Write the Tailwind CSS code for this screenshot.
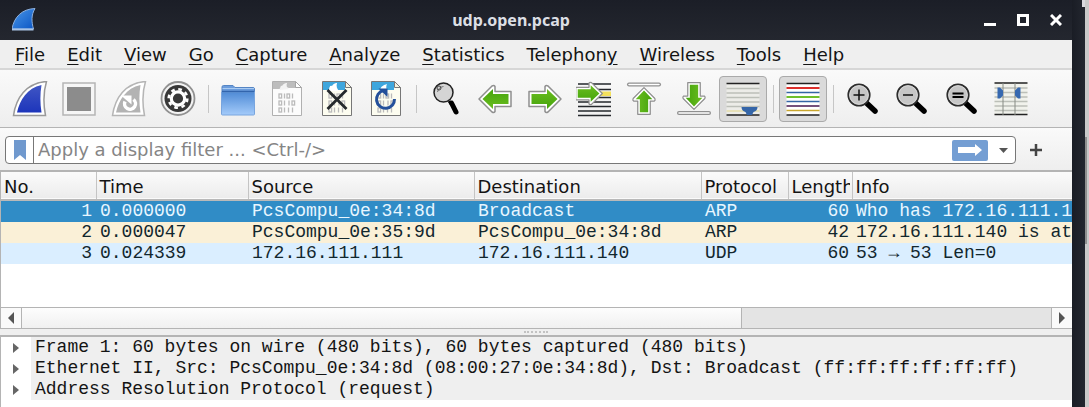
<!DOCTYPE html>
<html lang="en">
<head>
<meta charset="utf-8">
<title>udp.open.pcap</title>
<script src="https://cdn.jsdelivr.net/npm/@tailwindcss/browser@4"></script>
</head>
<body class="flex h-screen overflow-hidden bg-[#20232b] font-['DejaVu_Sans',sans-serif] text-lg text-[#141414]">

<svg class="size-0 shrink-0" aria-hidden="true">
  <defs>
    <linearGradient id="finBlue" x1="0" y1="0" x2="0" y2="1"><stop offset="0" stop-color="#4056c4"/><stop offset="1" stop-color="#1d35bb"/></linearGradient>
    <linearGradient id="finTitle" x1="0" y1="0" x2="1" y2="1"><stop offset="0" stop-color="#4a97e8"/><stop offset="1" stop-color="#0a55c4"/></linearGradient>
    <linearGradient id="folderFill" x1="0" y1="0" x2="0" y2="1"><stop offset="0" stop-color="#4f8bd6"/><stop offset="1" stop-color="#a4cbfa"/></linearGradient>
    <linearGradient id="green" x1="0" y1="0" x2="0" y2="1"><stop offset="0" stop-color="#6abd20"/><stop offset="1" stop-color="#45a40c"/></linearGradient>
    <symbol id="digits" viewBox="0 0 18 20">
      <g fill="none" stroke="currentColor" stroke-width="1.3">
        <rect x="1" y="1" width="2.6" height="4"/><path d="M6.5 .4v5.2M14.500 .4v5.200"/><rect x="9" y="1" width="2.600" height="4"/>
        <rect x="1" y="8" width="2.600" height="4"/><path d="M6.500 7.400v5.200M11 7.400v5.200"/><rect x="14" y="8" width="2.600" height="4"/>
        <rect x="1" y="15" width="2.600" height="4"/><path d="M6.500 14.400v5.200M10.500 14.400v5.200M14.500 14.400v5.200"/>
      </g>
    </symbol>
    <symbol id="lens" viewBox="0 0 36 36">
      <path d="M22 22.500l8 7.500" stroke="#000" stroke-width="5.500" stroke-linecap="round"/>
      <path d="M20 21l4 4" stroke="#000" stroke-width="3"/>
      <circle cx="14" cy="14" r="10.700" fill="#c6c6c6" stroke="#2c2c2c" stroke-width="1.800"/>
      <circle cx="14" cy="14" r="9.300" fill="none" stroke="#d9d9d9" stroke-width="1"/>
    </symbol>
    <symbol id="arrow" viewBox="0 0 36 30">
      <path d="M2 7.500h16V2.500q1-1.500 3-.5L34 15 21 28q-2 1-3-.5V22.500H2z" fill="#fff" stroke="#8f8f8f" stroke-width="1.500" stroke-linejoin="round"/>
      <path d="M4.500 10h15.500V5L30.500 15 20 25V20H4.500z" fill="url(#green)"/>
    </symbol>
  </defs>
</svg>

<main class="flex min-w-0 flex-1 flex-col bg-[#efefef]">
  <header class="flex h-10 shrink-0 items-center bg-linear-to-b from-[#1b1e27] to-[#24272f] px-3">
    <svg class="h-6 w-24 shrink-0" viewBox="0 0 96 24" aria-label="Wireshark">
      <path d="M0 21C2 9 10 1 23 .5C19 7 19.500 14 21.500 21z" fill="url(#finTitle)" stroke="#8fb0dc" stroke-width="1"/>
      <path d="M0 21.500h21.500" stroke="#a9c4e6" stroke-width="2"/>
    </svg>
    <h1 class="min-w-0 flex-1 truncate pr-[59px] text-center font-['Noto_Sans',sans-serif] text-base font-bold text-[#dcdfe4]">udp.open.pcap</h1>
    <div class="-mr-3 flex shrink-0 items-center">
      <button class="flex h-8 w-[33px] items-center justify-center" aria-label="Minimize"><svg class="size-3" viewBox="0 0 12 12"><path d="M0 10.500h12" stroke="#fff" stroke-width="3"/></svg></button>
      <button class="flex h-8 w-[33px] items-center justify-center" aria-label="Maximize"><svg class="size-3" viewBox="0 0 12 12"><path d="M1.500 1.500h9v9h-9z" fill="none" stroke="#fff" stroke-width="3"/></svg></button>
      <button class="flex h-8 w-[33px] items-center justify-center" aria-label="Close"><svg class="size-3" viewBox="0 0 12 12"><path d="M1 1l10 10M11 1L1 11" stroke="#fff" stroke-width="3"/></svg></button>
    </div>
  </header>

  <nav class="flex h-[30px] shrink-0 items-center border-b-2 border-[#d6d6d6] px-1 pt-px whitespace-nowrap">
    <button class="px-[11px]"><span class="underline decoration-1 underline-offset-3">F</span>ile</button>
    <button class="px-[11px]"><span class="underline decoration-1 underline-offset-3">E</span>dit</button>
    <button class="px-[11px]"><span class="underline decoration-1 underline-offset-3">V</span>iew</button>
    <button class="px-[11px]"><span class="underline decoration-1 underline-offset-3">G</span>o</button>
    <button class="px-[11px]"><span class="underline decoration-1 underline-offset-3">C</span>apture</button>
    <button class="px-[11px]"><span class="underline decoration-1 underline-offset-3">A</span>nalyze</button>
    <button class="px-[11px]"><span class="underline decoration-1 underline-offset-3">S</span>tatistics</button>
    <button class="px-[11px]">Telephon<span class="underline decoration-1 underline-offset-3">y</span></button>
    <button class="px-[11px]"><span class="underline decoration-1 underline-offset-3">W</span>ireless</button>
    <button class="px-[11px]"><span class="underline decoration-1 underline-offset-3">T</span>ools</button>
    <button class="px-[11px]"><span class="underline decoration-1 underline-offset-3">H</span>elp</button>
  </nav>

  <div class="flex h-[58px] shrink-0 items-center border-b border-[#b4b4b4] bg-linear-to-b from-[#fafafa] to-[#eeeeee] pl-[5px]" role="toolbar">
    <div class="grid w-[198px] shrink-0 grid-cols-4 justify-items-center">
      <button aria-label="Start capture"><svg class="size-9" viewBox="0 0 36 36">
        <path d="M1.500 34.500C4 17 14 2 34.500 .500C31 12 31.500 24 33.500 34.500z" fill="#fff" stroke="#999" stroke-width="1.500"/>
        <path d="M5 31.500C8 19 15 7 29.500 4C28 13 28 22 29.500 31.500z" fill="url(#finBlue)"/></svg></button>
      <button aria-label="Stop capture"><svg class="size-9" viewBox="0 0 36 36">
        <path d="M2 2h32v32H2z" fill="#f6f6f6" stroke="#b5b5b5" stroke-width="1.500"/><path d="M6 6h24v24H6z" fill="#8c8c8c"/></svg></button>
      <button aria-label="Restart capture"><svg class="size-9" viewBox="0 0 36 36">
        <path d="M1.500 34.500C4 17 14 2 34.500 .500C31 12 31.500 24 33.500 34.500z" fill="#fff" stroke="#b5b5b5" stroke-width="1.500"/>
        <path d="M5 31.500C8 19 15 7 29.500 4C28 13 28 22 29.500 31.500z" fill="#b3b3b3"/>
        <path d="M22.500 18.500a5.500 5.500 0 1 1-8.500 2" fill="none" stroke="#fff" stroke-width="3.500"/><path d="M10 14.500h10.500v9z" fill="#fff"/></svg></button>
      <button aria-label="Capture options"><svg class="size-9" viewBox="0 0 36 36">
        <circle cx="18" cy="17.500" r="16.500" fill="#f4f4f4" stroke="#919191" stroke-width="1.800"/><circle cx="18" cy="17.500" r="13.500" fill="#383838"/>
        <circle cx="18" cy="17.500" r="6.700" fill="none" stroke="#fff" stroke-width="3.200"/>
        <circle cx="18" cy="17.500" r="9.300" fill="none" stroke="#fff" stroke-width="2.600" stroke-dasharray="3.650 3.653"/></svg></button>
    </div>
    <div class="flex h-7 w-[10px] shrink-0 justify-center"><i class="w-px bg-[#c6c6c6]"></i></div>
    <div class="grid w-[198px] shrink-0 grid-cols-4 justify-items-center">
      <button aria-label="Open file"><svg class="size-9" viewBox="0 0 36 36">
        <path d="M2 6q0-1.500 1.500-1.500h9.500l2 2h18q1.500 0 1.500 1.500V30H2z" fill="#6c9ddd" stroke="#5585c4"/>
        <path d="M2.500 7.500h31.500" stroke="#a9cbf2"/><path d="M1.500 11h33v22q0 1-1 1h-31q-1 0-1-1z" fill="url(#folderFill)" stroke="#79a5de"/><path d="M2 10.500h32" stroke="#3265ad" stroke-width="1.500"/></svg></button>
      <button aria-label="Save file"><svg class="size-9" viewBox="0 0 36 36">
        <path d="M3.500 .500h23l6 6v28h-29z" fill="#fcfcfc" stroke="#b0b0b0"/><path d="M4 1h22l5.500 6H20l-4-1-6 2H4z" fill="#bdbdbd"/><path d="M11 9c0-3 1-5 2-4 2-3 4-3 5-3-1 3 0 5 2 6z" fill="#f3f3f3"/><path d="M26.500 .500v6h6z" fill="#fff" stroke="#a5a5a5"/>
        <use href="#digits" x="9" y="12" width="18" height="20" color="#bbb"/></svg></button>
      <button aria-label="Close file"><svg class="size-9" viewBox="0 0 36 36">
        <path d="M3.500 .500h23l6 6v28h-29z" fill="#fdfdf0" stroke="#777"/><path d="M4 1h22v8H4z" fill="#3ea6dd"/><path d="M10 10c0-4 1-6 3-5 2-3 4-3 5-3-1 3 0 6 2 8z" fill="#fff"/><path d="M26.500 .500v6h6z" fill="#f7f3df" stroke="#777"/>
        <use href="#digits" x="9" y="12" width="18" height="20" color="#bbb"/><path d="M8.500 9l19 19M27.500 9l-19 19" stroke="#252a2c" stroke-width="2.800"/></svg></button>
      <button aria-label="Reload file"><svg class="size-9" viewBox="0 0 36 36">
        <path d="M3.500 .500h23l6 6v28h-29z" fill="#fdfdf0" stroke="#777"/><path d="M4 1h22v8H4z" fill="#3ea6dd"/><path d="M12 9c1-4 4-5 7-6-1 2-1 4 0 6z" fill="#fff"/><path d="M26.500 .500v6h6z" fill="#f7f3df" stroke="#777"/>
        <use href="#digits" x="9" y="12" width="18" height="20" color="#bbb"/><path d="M26.500 18a9 9 0 1 1-11-8.500" fill="none" stroke="#24509a" stroke-width="3"/><path d="M10.500 7.500h9v8.500z" fill="#24509a"/></svg></button>
    </div>
    <div class="flex h-7 w-[10px] shrink-0 justify-center"><i class="w-px bg-[#c6c6c6]"></i></div>
    <div class="grid w-[347px] shrink-0 grid-cols-7 items-center justify-items-center">
      <button aria-label="Find packet"><svg class="size-9" viewBox="0 0 36 36">
        <path d="M21 20l2 3" stroke="#000" stroke-width="3"/><path d="M23.500 22l4.500 9" stroke="#000" stroke-width="5" stroke-linecap="round"/>
        <circle cx="15.500" cy="11.500" r="9.500" fill="#d5d5d5" stroke="#222" stroke-width="1.500"/><path d="M9.500 11q1-5 6-5.500" fill="none" stroke="#777"/><circle cx="11" cy="7" r="2" fill="none" stroke="#444"/></svg></button>
      <button aria-label="Previous packet"><svg class="h-[30px] w-9 rotate-180" viewBox="0 0 36 30"><use href="#arrow"/></svg></button>
      <button aria-label="Next packet"><svg class="h-[30px] w-9" viewBox="0 0 36 30"><use href="#arrow"/></svg></button>
      <button aria-label="Go to packet"><svg class="size-9" viewBox="0 0 36 36">
        <path d="M2 3h33M2 8.500h33M2 16.500h33M2 21h33M2 25.500h33M2 30h33M2 34.500h33" stroke="#25282c" stroke-width="1.500"/><path d="M22 10.500h13v4.500H22z" fill="#f3e05c"/>
        <use href="#arrow" x="-2" y="0" width="30" height="25"/></svg></button>
      <button aria-label="First packet"><svg class="size-9" viewBox="0 0 36 36">
        <path d="M3 3.500h30" stroke="#8f8f8f" stroke-width="4" stroke-linecap="round"/><path d="M3 3.500h30" stroke="#fff" stroke-width="1.500" stroke-linecap="round"/>
        <use href="#arrow" x="-35" y="5.500" width="30" height="25" transform="rotate(-90)"/></svg></button>
      <button aria-label="Last packet"><svg class="size-9" viewBox="0 0 36 36">
        <path d="M3 32h30" stroke="#8f8f8f" stroke-width="4" stroke-linecap="round"/><path d="M3 32h30" stroke="#fff" stroke-width="1.500" stroke-linecap="round"/>
        <use href="#arrow" x="0" y="-30.500" width="30" height="25" transform="rotate(90)"/></svg></button>
      <button class="flex h-[46px] w-12 items-center justify-center rounded-sm border border-[#aaa] bg-[#dadada]" aria-pressed="true" aria-label="Auto scroll"><svg class="size-9" viewBox="0 0 36 36">
        <path d="M1.500 2h33v32h-33z" fill="#ecece8"/><path d="M1.500 7.500h33M1.500 12h33M1.500 16.500h33M1.500 21h33M1.500 25.500h33" stroke="#bcbfb8" stroke-width="1.500"/><path d="M1.500 30h33" stroke="#e5dda9" stroke-width="1.500"/>
        <path d="M1.500 2.500h33M1.500 34h33" stroke="#222" stroke-width="1.500"/><path d="M16.500 26h16q0 4-4 5l-1.500 3h-5l-1.500-3q-4-1-4-5z" fill="#3566a8"/></svg></button>
    </div>
    <div class="flex h-7 w-[10px] shrink-0 justify-center"><i class="w-px bg-[#c6c6c6]"></i></div>
    <div class="grid w-[50px] shrink-0 justify-items-center">
      <button class="flex h-[46px] w-12 items-center justify-center rounded-sm border border-[#aaa] bg-[#dadada]" aria-pressed="true" aria-label="Colorize packets"><svg class="size-9" viewBox="0 0 36 36">
        <path d="M1.500 2h33v32h-33z" fill="#fff"/><path d="M1.500 2.500h33M1.500 34h33" stroke="#222" stroke-width="1.500"/><path d="M1.500 7h33" stroke="#dc2f2b" stroke-width="2"/><path d="M1.500 11.500h33" stroke="#3465a4" stroke-width="1.500"/><path d="M1.500 16h33" stroke="#70c02c" stroke-width="2"/><path d="M1.500 20.500h33" stroke="#3465a4" stroke-width="1.500"/><path d="M1.500 25h33" stroke="#75507b" stroke-width="2"/><path d="M1.500 29.500h33" stroke="#c9a62c" stroke-width="1.500"/></svg></button>
    </div>
    <div class="flex h-7 w-[10px] shrink-0 justify-center"><i class="w-px bg-[#c6c6c6]"></i></div>
    <div class="grid w-[198px] shrink-0 grid-cols-4 items-center justify-items-center">
      <button aria-label="Zoom in"><svg class="size-9" viewBox="0 0 36 36"><use href="#lens"/><path d="M8.500 14h11M14 8.500v11" stroke="#111" stroke-width="1.500"/></svg></button>
      <button aria-label="Zoom out"><svg class="size-9" viewBox="0 0 36 36"><use href="#lens"/><path d="M9 14h10" stroke="#111" stroke-width="1.500"/></svg></button>
      <button aria-label="Normal size"><svg class="size-9" viewBox="0 0 36 36"><use href="#lens"/><path d="M8.500 12.500h11M8.500 16h11" stroke="#000" stroke-width="2"/></svg></button>
      <button aria-label="Resize columns"><svg class="size-9" viewBox="0 0 36 36">
        <path d="M1.500 2h33v32h-33z" fill="#f1f2ec"/><path d="M1.500 7h33M1.500 11.500h33M1.500 16h33M1.500 20.500h33M1.500 25h33M1.500 29.500h33" stroke="#bcbfb8" stroke-width="1.500"/><path d="M1.500 2h33M1.500 33.500h33" stroke="#222" stroke-width="1.500"/><path d="M10 2v32M22 2v32" stroke="#888c85"/>
        <path d="M4.500 6.500h2.500l3 3v5l-3 3h-2.500zM27.500 6.500H25l-3 3v5l3 3h2.500z" fill="#3668b0"/></svg></button>
    </div>
  </div>

  <div class="flex h-[42px] shrink-0 items-center gap-2 bg-linear-to-b from-[#fafafa] to-[#eeeeee] pt-0.5 pr-6 pl-[5px]">
    <div class="flex h-7 min-w-0 flex-1 items-center rounded-sm border border-[#777] bg-white">
      <button class="flex h-full w-7 shrink-0 items-center justify-center border-r border-[#777]" aria-label="Bookmarks"><svg class="h-5 w-3" viewBox="0 0 12 20"><path d="M0 0h12v20l-6-5-6 5z" fill="#7099ce"/></svg></button>
      <input class="min-w-0 flex-1 px-1 outline-none placeholder:text-[#858585]" type="text" aria-label="Display filter" placeholder="Apply a display filter ... &lt;Ctrl-/&gt;">
      <button class="flex h-[21px] w-9 shrink-0 items-center justify-center rounded-xs bg-[#749ed3]" aria-label="Apply filter"><svg class="h-3 w-6" viewBox="0 0 24 12"><path d="M0 3h17V0l7 6-7 6V9H0z" fill="#fff"/></svg></button>
      <button class="flex h-full w-[27px] shrink-0 items-center justify-center pl-1" aria-label="Recent filters"><svg class="h-[5px] w-[9px]" viewBox="0 0 9 5"><path d="M0 0h9L4.500 5z" fill="#555"/></svg></button>
    </div>
    <button class="flex w-6 shrink-0 justify-center" aria-label="Add filter button"><svg class="size-3" viewBox="0 0 12 12"><path d="M0 6h12M6 0v12" stroke="#444" stroke-width="2.500"/></svg></button>
  </div>

  <section class="flex h-[159px] shrink-0 flex-col border-t-2 border-b border-l border-[#b4b4b4] bg-white">
    <div class="min-h-0 flex-1 overflow-hidden">
      <table class="w-full table-fixed border-collapse text-left whitespace-nowrap">
        <colgroup><col class="w-[95px]"><col class="w-[152px]"><col class="w-[226px]"><col class="w-[227px]"><col class="w-[87px]"><col class="w-[64px]"><col></colgroup>
        <thead>
          <tr class="h-7 border-b-2 border-[#b9b9b9] bg-linear-to-b from-[#fbfbfb] to-[#ececec] leading-6">
            <th class="overflow-hidden border-r border-[#c4c4c4] pt-0.5 pl-[3px] font-normal">No.</th>
            <th class="overflow-hidden border-r border-[#c4c4c4] pt-0.5 pl-[3px] font-normal">Time</th>
            <th class="overflow-hidden border-r border-[#c4c4c4] pt-0.5 pl-[3px] font-normal">Source</th>
            <th class="overflow-hidden border-r border-[#c4c4c4] pt-0.5 pl-[3px] font-normal">Destination</th>
            <th class="overflow-hidden border-r border-[#c4c4c4] pt-0.5 pl-[3px] font-normal">Protocol</th>
            <th class="overflow-hidden border-r border-[#c4c4c4] pt-0.5 pr-0.5 pl-[3px] font-normal"><div class="overflow-hidden">Length</div></th>
            <th class="overflow-hidden pt-0.5 pl-[3px] font-normal">Info</th>
          </tr>
        </thead>
        <tbody class="font-['Liberation_Mono',monospace] leading-[21px] text-[#12272e]">
          <tr class="bg-[#308cc6] text-[#e8f6ff]"><td class="pr-1 text-right">1</td><td class="pl-1">0.000000</td><td class="pl-1">PcsCompu_0e:34:8d</td><td class="pl-1">Broadcast</td><td class="pl-1">ARP</td><td class="pr-[3px] text-right">60</td><td class="overflow-hidden pl-1">Who has 172.16.111.140? Tell 172.16.111.111</td></tr>
          <tr class="bg-[#faf0d7]"><td class="pr-1 text-right">2</td><td class="pl-1">0.000047</td><td class="pl-1">PcsCompu_0e:35:9d</td><td class="pl-1">PcsCompu_0e:34:8d</td><td class="pl-1">ARP</td><td class="pr-[3px] text-right">42</td><td class="overflow-hidden pl-1">172.16.111.140 is at 08:00:27:0e:35:9d</td></tr>
          <tr class="bg-[#daeeff]"><td class="pr-1 text-right">3</td><td class="pl-1">0.024339</td><td class="pl-1">172.16.111.111</td><td class="pl-1">172.16.111.140</td><td class="pl-1">UDP</td><td class="pr-[3px] text-right">60</td><td class="overflow-hidden pl-1">53 → 53 Len=0</td></tr>
        </tbody>
      </table>
    </div>
    <div class="flex h-[21px] shrink-0 border-t border-[#b4b4b4] bg-[#e4e4e4]">
      <button class="flex w-[21px] items-center justify-center border-r border-[#b4b4b4] bg-[#fafafa]" aria-label="Scroll left"><svg class="h-3 w-1.5" viewBox="0 0 6 12"><path d="M6 0v12L0 6z" fill="#555"/></svg></button>
      <div class="flex-1"><div class="h-full w-[70%] border-r border-[#b4b4b4] bg-linear-to-b from-[#fdfdfd] to-[#f0f0f0]"></div></div>
      <button class="flex w-[21px] items-center justify-center border-l border-[#b4b4b4] bg-[#fafafa]" aria-label="Scroll right"><svg class="h-3 w-1.5" viewBox="0 0 6 12"><path d="M0 0v12l6-6z" fill="#555"/></svg></button>
    </div>
  </section>

  <div class="flex h-[6px] shrink-0 items-center justify-center"><i class="w-6 border-t-2 border-dotted border-[#c2c2c2]"></i></div>

  <section class="flex-1 border-t-2 border-l border-[#b4b4b4] bg-white font-['Liberation_Mono',monospace] leading-[21px] whitespace-nowrap">
    <ul>
      <li><button class="flex w-full text-left"><span class="flex w-[30px] shrink-0 items-center justify-center"><svg class="h-2.5 w-1.5" viewBox="0 0 6 10"><path d="M0 0v10l6-5z" fill="#666"/></svg></span><span class="flex-1 bg-[#efefef] pl-1">Frame 1: 60 bytes on wire (480 bits), 60 bytes captured (480 bits)</span></button></li>
      <li><button class="flex w-full text-left"><span class="flex w-[30px] shrink-0 items-center justify-center"><svg class="h-2.5 w-1.5" viewBox="0 0 6 10"><path d="M0 0v10l6-5z" fill="#666"/></svg></span><span class="flex-1 bg-[#efefef] pl-1">Ethernet II, Src: PcsCompu_0e:34:8d (08:00:27:0e:34:8d), Dst: Broadcast (ff:ff:ff:ff:ff:ff)</span></button></li>
      <li><button class="flex w-full text-left"><span class="flex w-[30px] shrink-0 items-center justify-center"><svg class="h-2.5 w-1.5" viewBox="0 0 6 10"><path d="M0 0v10l6-5z" fill="#666"/></svg></span><span class="flex-1 bg-[#efefef] pl-1">Address Resolution Protocol (request)</span></button></li>
    </ul>
  </section>
</main>

<aside class="flex w-[17px] shrink-0 justify-end bg-linear-to-r from-[#1a1d25] to-[#262a33]" aria-hidden="true">
  <i class="h-[7px] w-[3px] bg-[#d9d9de]"></i>
  <div class="flex w-1 flex-col bg-[#c9c9c9]"><i class="mt-[137px] h-[107px] w-0.5 bg-[#8f8f8f]"></i></div>
</aside>
</body>
</html>
